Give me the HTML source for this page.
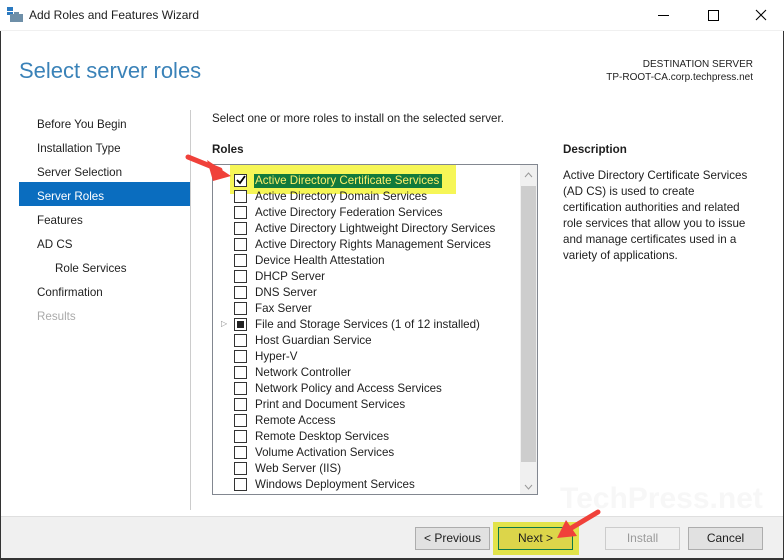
<!DOCTYPE html><html><head><style>
*{margin:0;padding:0;box-sizing:border-box}
body{width:784px;height:560px;overflow:hidden;background:#fff;font-family:"Liberation Sans",sans-serif;font-size:11.6px;color:#1e1e1e;position:relative}
.a{position:absolute;white-space:nowrap}
.cb{position:absolute;left:234px;width:13px;height:13px;border:1px solid #333;background:#fff}
.lbl{position:absolute;left:255px;line-height:14px}
.nav{position:absolute;left:37px;line-height:16px;color:#1e1e1e}
.btn{position:absolute;top:527px;height:23px;border:1px solid #adadad;background:#e1e1e1;text-align:center;line-height:21px;font-size:12px}
</style></head><body>
<div class="a" style="left:0;top:0;width:784px;height:31px;background:#fff;border-bottom:1px solid #f0f0f0"></div>
<svg class="a" style="left:6px;top:7px" width="18" height="16"><rect x="1" y="0" width="6" height="4" fill="#2a79c0"/><rect x="1" y="5" width="6" height="3" fill="#2a79c0"/><rect x="4" y="7" width="13" height="8" fill="#6e8fa8"/><rect x="8" y="5" width="5" height="2" fill="#6e8fa8"/></svg>
<div class="a" style="left:29px;top:8px;font-size:12px">Add Roles and Features Wizard</div>
<div class="a" style="left:658px;top:15px;width:11px;height:1px;background:#000"></div>
<div class="a" style="left:708px;top:10px;width:11px;height:11px;border:1px solid #000"></div>
<svg class="a" style="left:755px;top:9px" width="12" height="12"><path d="M1 1L11 11M11 1L1 11" stroke="#000" stroke-width="1.1"/></svg>
<div class="a" style="left:0;top:31px;width:1px;height:529px;background:#333"></div>
<div class="a" style="right:0;top:31px;width:1px;height:529px;background:#333"></div>
<div class="a" style="left:0;bottom:0;width:784px;height:2px;background:#333"></div>
<div class="a" style="left:19px;top:58px;font-size:22px;color:#3a82b8">Select server roles</div>
<div class="a" style="right:31px;top:58px;font-size:10px;text-align:right;line-height:13px">DESTINATION SERVER<br>TP-ROOT-CA.corp.techpress.net</div>
<div class="a" style="left:190px;top:110px;width:1px;height:400px;background:#ccc"></div>
<div class="nav" style="top:117px">Before You Begin</div>
<div class="nav" style="top:141px">Installation Type</div>
<div class="nav" style="top:165px">Server Selection</div>
<div class="a" style="left:19px;top:182px;width:171px;height:24px;background:#0a6dbf"></div>
<div class="nav" style="top:189px;color:#fff">Server Roles</div>
<div class="nav" style="top:213px">Features</div>
<div class="nav" style="top:237px">AD CS</div>
<div class="nav" style="top:261px;left:55px">Role Services</div>
<div class="nav" style="top:285px">Confirmation</div>
<div class="nav" style="top:309px;color:#aaa">Results</div>
<div class="a" style="left:212px;top:112px">Select one or more roles to install on the selected server.</div>
<div class="a" style="left:212px;top:143px;font-weight:bold">Roles</div>
<div class="a" style="left:563px;top:143px;font-weight:bold">Description</div>
<div class="a" style="left:563px;top:168px;line-height:16px;white-space:normal;width:188px">Active Directory Certificate Services (AD CS) is used to create certification authorities and related role services that allow you to issue and manage certificates used in a variety of applications.</div>
<div class="a" style="left:212px;top:164px;width:326px;height:331px;border:1px solid #828790;background:#fff"></div>
<div class="a" style="left:520px;top:165px;width:17px;height:329px;background:#f0f0f0"></div>
<div class="a" style="left:521px;top:186px;width:15px;height:276px;background:#cdcdcd"></div>
<svg class="a" style="left:524px;top:172px" width="9" height="6"><path d="M1 5L4.5 1L8 5" stroke="#999" fill="none"/></svg>
<svg class="a" style="left:524px;top:484px" width="9" height="6"><path d="M1 1L4.5 5L8 1" stroke="#999" fill="none"/></svg>
<div class="a" style="left:230px;top:165px;width:226px;height:29px;background:#f5f53a;opacity:.85"></div>
<div class="a" style="left:254px;top:174px;width:188px;height:14px;background:#127a3c"></div>
<div class="cb" style="top:174px"></div>
<svg class="a" style="left:236px;top:175px" width="10" height="10"><path d="M1 5L4 8L9 1" stroke="#000" stroke-width="1.8" fill="none"/></svg>
<div class="lbl" style="top:174px;color:#ffef6b">Active Directory Certificate Services</div>
<div class="cb" style="top:190px"></div><div class="lbl" style="top:190px">Active Directory Domain Services</div>
<div class="cb" style="top:206px"></div><div class="lbl" style="top:206px">Active Directory Federation Services</div>
<div class="cb" style="top:222px"></div><div class="lbl" style="top:222px">Active Directory Lightweight Directory Services</div>
<div class="cb" style="top:238px"></div><div class="lbl" style="top:238px">Active Directory Rights Management Services</div>
<div class="cb" style="top:254px"></div><div class="lbl" style="top:254px">Device Health Attestation</div>
<div class="cb" style="top:270px"></div><div class="lbl" style="top:270px">DHCP Server</div>
<div class="cb" style="top:286px"></div><div class="lbl" style="top:286px">DNS Server</div>
<div class="cb" style="top:302px"></div><div class="lbl" style="top:302px">Fax Server</div>
<div class="cb" style="top:318px"></div><div class="a" style="left:237px;top:321px;width:7px;height:7px;background:#222"></div><div class="a" style="left:221px;top:319px;font-size:8px;color:#888">▷</div><div class="lbl" style="top:318px">File and Storage Services (1 of 12 installed)</div>
<div class="cb" style="top:334px"></div><div class="lbl" style="top:334px">Host Guardian Service</div>
<div class="cb" style="top:350px"></div><div class="lbl" style="top:350px">Hyper-V</div>
<div class="cb" style="top:366px"></div><div class="lbl" style="top:366px">Network Controller</div>
<div class="cb" style="top:382px"></div><div class="lbl" style="top:382px">Network Policy and Access Services</div>
<div class="cb" style="top:398px"></div><div class="lbl" style="top:398px">Print and Document Services</div>
<div class="cb" style="top:414px"></div><div class="lbl" style="top:414px">Remote Access</div>
<div class="cb" style="top:430px"></div><div class="lbl" style="top:430px">Remote Desktop Services</div>
<div class="cb" style="top:446px"></div><div class="lbl" style="top:446px">Volume Activation Services</div>
<div class="cb" style="top:462px"></div><div class="lbl" style="top:462px">Web Server (IIS)</div>
<div class="cb" style="top:478px"></div><div class="lbl" style="top:478px">Windows Deployment Services</div>
<div class="a" style="left:560px;top:482px;font-size:30px;font-weight:bold;color:#f7f7f7">TechPress.net</div>
<div class="a" style="left:1px;top:516px;width:782px;height:42px;background:#f0f0f0;border-top:1px solid #dfdfdf"></div>
<div class="btn" style="left:415px;width:75px">&lt; Previous</div>
<div class="a" style="left:493px;top:522px;width:86px;height:33px;background:#e2e34a"></div>
<div class="btn" style="left:498px;width:75px;border:1px solid #0e7a4a;background:#dcd54a">Next &gt;</div>
<div class="btn" style="left:605px;width:75px;background:#f0f0f0;border-color:#ccc;color:#9a9a9a">Install</div>
<div class="btn" style="left:688px;width:75px">Cancel</div>
<svg class="a" style="left:0;top:0" width="784" height="560">
<path d="M188 157L220 170" stroke="#f0413a" stroke-width="5" stroke-linecap="round"/><path d="M231 176L207 160L213 181Z" fill="#f0413a"/>
<path d="M598 512L568 530" stroke="#f0413a" stroke-width="5" stroke-linecap="round"/><path d="M557 538L566 520L577 536Z" fill="#f0413a"/>
</svg>
</body></html>
